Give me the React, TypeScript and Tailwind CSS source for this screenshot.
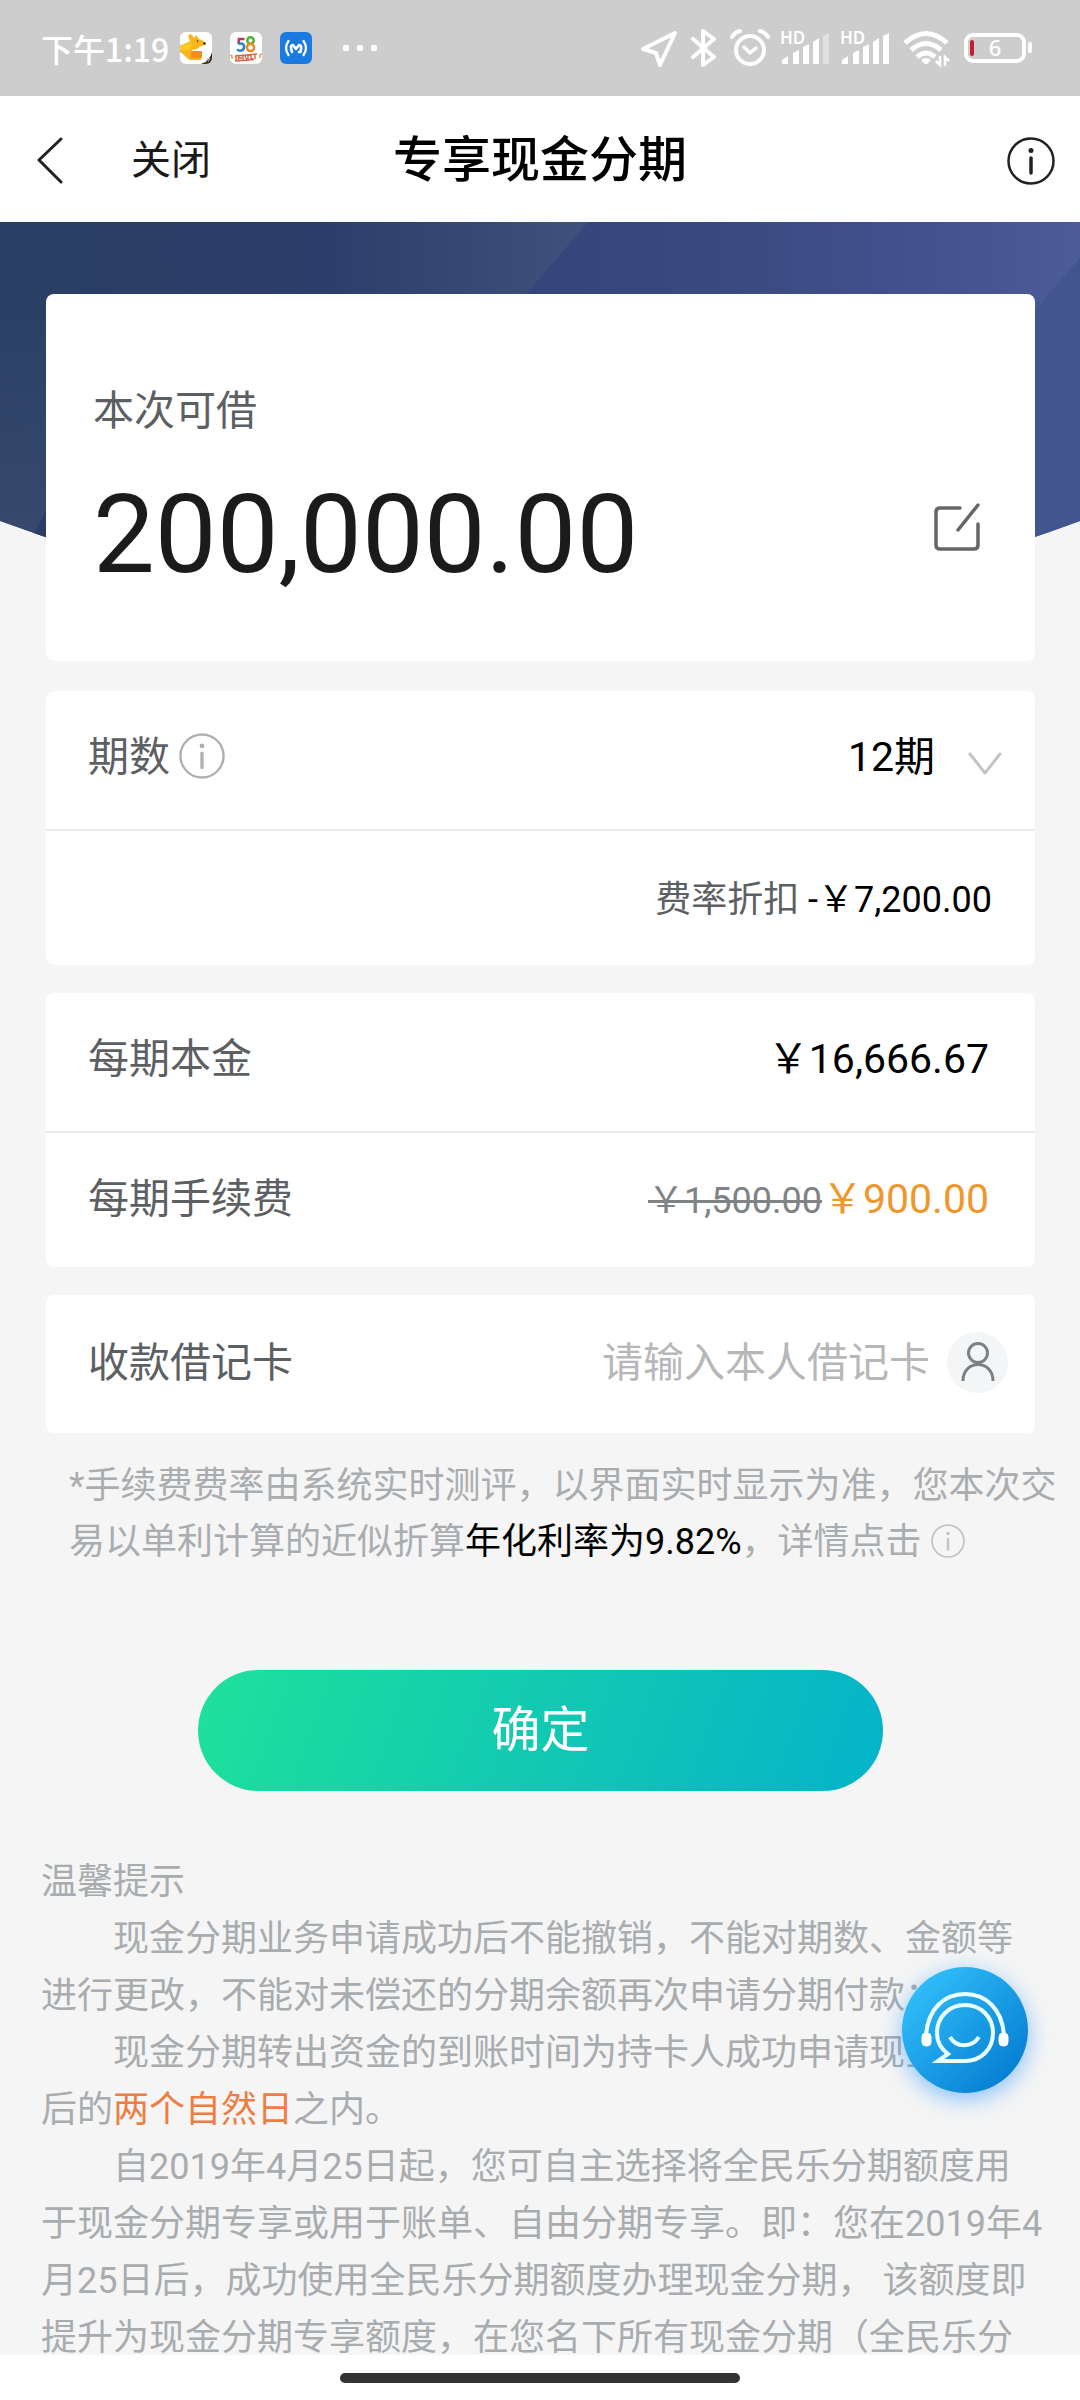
import { useState } from "react";
import type { ReactNode } from "react";

function KangarooIcon() {
  return (
    <svg viewBox="0 0 32 32" className="size-8" aria-hidden="true">
      <defs>
        <clipPath id="kangaroo-clip">
          <rect width="32" height="32" rx="6" />
        </clipPath>
      </defs>
      <g clipPath="url(#kangaroo-clip)">
        <rect width="32" height="32" fill="#fff" />
        <path d="M0 13 C3 13 6 11 10 9 L8 3 C10 1 13 3 14 6 L16 3 L19 7 C23 8 25 10 25 12 L23 14 C21 14 19 15 17 17 L12 18 L11 25 L21 26 L21 28 L10 28 C6 26 4 22 0 20 Z" fill="#f8b51c" />
        <path d="M0 13 C5 13 8 12 11 10 C14 15 8 20 0 18 Z" fill="#fcc925" />
        <rect x="11" y="19" width="11" height="7" rx="1" fill="#f58a1f" />
        <circle cx="24.500" cy="11.500" r="1.200" fill="#2b1c14" />
        <circle cx="17.500" cy="9" r="0.800" fill="#2b1c14" />
        <path d="M21 32 Q30 29 32 20 V32 Z" fill="#33241d" />
        <path d="M25 31 l3 -5 M28 30 l2 -4" stroke="#c9b8a8" strokeWidth="1" fill="none" />
      </g>
    </svg>
  );
}

function FiftyEightIcon() {
  return (
    <svg viewBox="0 0 32 32" className="size-8" aria-hidden="true">
      <rect width="32" height="32" rx="6" fill="#fff" />
      <path d="M14.500 7 H9 L8.500 12" fill="none" stroke="#c2335f" strokeWidth="2.600" />
      <path d="M8.500 12 C13 10.500 14.500 13 14 15.500 C13.500 19 9.500 19.500 7 17.500" fill="none" stroke="#2487c8" strokeWidth="2.600" />
      <circle cx="20.500" cy="8.500" r="3.200" fill="none" stroke="#4fb032" strokeWidth="2.500" />
      <circle cx="20.500" cy="15.500" r="3.600" fill="none" stroke="#ef8a23" strokeWidth="2.500" />
      <path d="M5 24 L27 22 M6 24 v5 M9 24 l-1 4 M9 26 h3 M13 23 v5 M15 24 l2 4 M18 23 v5 M21 23 v4 h2 M25 23 v4 M5 29 L24 27.500" fill="none" stroke="#dc5a35" strokeWidth="1.300" />
      <path d="M0 23 l2 1 v3 M32 22 l-2 1 v3" fill="none" stroke="#eda04e" strokeWidth="1.500" />
    </svg>
  );
}

function MSignalIcon() {
  return (
    <svg viewBox="0 0 32 32" className="size-8" aria-hidden="true" fill="none" stroke="#fff" strokeLinecap="round" strokeLinejoin="round">
      <rect width="32" height="32" rx="6" fill="#1b7ae0" stroke="none" />
      <path d="M8.500 9 Q3.500 16 8.500 23 M23.500 9 Q28.500 16 23.500 23" strokeWidth="2.200" />
      <path d="M12 20 Q9.500 13 13 13 L16 17 L19 13 Q22.500 13 20.500 20 H19" strokeWidth="2.600" />
    </svg>
  );
}

function SignalIcon({ weak = false }: { weak?: boolean }) {
  return (
    <svg viewBox="0 -10 50 56" className="h-14 w-[50px]" aria-hidden="true" fill="#fff">
      <text x="0" y="14" fontFamily="Noto Sans" fontWeight="600" fontSize="17">HD</text>
      <path d="M2 34 V30 L8 26 V34 Z" />
      <path d="M13 34 V23 L19 20 V34 Z" />
      <path d="M23 34 V17 L29 14 V34 Z" />
      <path d="M33 34 V12 L39 8 V34 Z" />
      <path d="M43 34 V6 L49 3 V34 Z" opacity={weak ? 0.4 : 1} />
    </svg>
  );
}

function StatusBar() {
  return (
    <div className="flex h-24 shrink-0 items-center bg-[#cdcdcd] pl-[41px] pr-[46px] text-white">
      <span className="w-[139px] whitespace-nowrap font-['Noto_Sans_CJK_SC',sans-serif] text-[32px] font-medium leading-none">下午1:19</span>
      <div className="flex items-center gap-[18px]">
        <KangarooIcon />
        <FiftyEightIcon />
        <MSignalIcon />
        <svg viewBox="0 0 48 32" className="ml-[6px] h-8 w-12" aria-hidden="true" fill="#fff">
          <circle cx="10" cy="16" r="3.200" />
          <circle cx="24" cy="16" r="3.200" />
          <circle cx="38" cy="16" r="3.200" />
        </svg>
      </div>
      <div className="ml-auto flex items-center gap-[10px]" aria-hidden="true">
        <svg viewBox="0 0 40 40" className="size-10" fill="none" stroke="#fff" strokeWidth="4" strokeLinejoin="round">
          <path d="M35 5 L3 21 L16 25 L20 37 Z" />
        </svg>
        <svg viewBox="0 0 30 40" className="h-10 w-[30px]" fill="none" stroke="#fff" strokeWidth="4" strokeLinejoin="round" strokeLinecap="round">
          <path d="M3 11 L24 29 L13 37 V3 L24 11 L3 29" />
        </svg>
        <svg viewBox="0 0 40 40" className="size-10" fill="none" stroke="#fff" strokeWidth="4" strokeLinecap="round" strokeLinejoin="round">
          <circle cx="20" cy="22" r="14" />
          <path d="M14 19 L20 25 L26 20" strokeWidth="3.500" />
          <path d="M2 9 Q5 4 10 3 M30 3 Q35 4 38 9" />
        </svg>
        <SignalIcon weak />
        <SignalIcon />
        <svg viewBox="0 0 52 40" className="h-10 w-[52px]" fill="none" stroke="#fff" strokeWidth="5">
          <path d="M5 15 Q26 -4 47 15" />
          <path d="M11 22 Q26 9 41 22" />
          <path d="M17 29 Q26 21 35 29" />
          <path d="M21 32 Q26 28 31 32 L27 36 H25 Z" fill="#fff" stroke="none" />
          <path d="M40 28 V37 L36 33 M45 38 V29 L49 33" strokeWidth="2.500" />
        </svg>
        <svg viewBox="0 0 72 40" className="h-10 w-[72px]" fill="none">
          <rect x="4" y="7" width="58" height="26" rx="7" stroke="#fff" strokeWidth="4" />
          <rect x="8" y="12" width="4" height="16" rx="2" fill="#c11f2e" />
          <rect x="66" y="14" width="4" height="11" rx="2" fill="#fff" />
          <text x="33" y="28" textAnchor="middle" fontFamily="Noto Sans" fontSize="22" fill="#fff" fontWeight="500">6</text>
        </svg>
      </div>
    </div>
  );
}

function InfoIcon({ className }: { className: string }) {
  return (
    <svg viewBox="0 0 48 48" className={className} fill="none" stroke="currentColor" aria-hidden="true">
      <circle cx="24" cy="24" r="22.500" strokeWidth="2.500" />
      <path d="M24 21 V36" strokeWidth="3.500" strokeLinecap="round" />
      <circle cx="24" cy="13.500" r="2.500" fill="currentColor" stroke="none" />
    </svg>
  );
}

function Header() {
  return (
    <header className="grid h-[126px] shrink-0 grid-cols-[1fr_auto_1fr] items-center bg-white px-[25px] pt-1">
      <div className="flex items-center pl-[11px]">
        <button type="button" aria-label="返回">
          <svg viewBox="0 0 28 48" className="h-12 w-7" fill="none" stroke="#222" strokeWidth="3" strokeLinecap="round" strokeLinejoin="round">
            <path d="M25 2 L3 23 L25 45" />
          </svg>
        </button>
        <button type="button" className="ml-[67px] text-[40px] text-[#1a1a1a]">关闭</button>
      </div>
      <h1 className="text-[49px] font-medium text-black">专享现金分期</h1>
      <button type="button" aria-label="说明" className="justify-self-end text-[#222]">
        <InfoIcon className="size-12" />
      </button>
    </header>
  );
}

function Banner() {
  return (
    <svg viewBox="0 0 1080 360" preserveAspectRatio="none" className="absolute inset-x-0 top-0 h-[360px] w-full" aria-hidden="true">
      <defs>
        <clipPath id="banner-clip">
          <path d="M0 0 H1080 V299 Q540 499 0 299 Z" />
        </clipPath>
        <linearGradient id="banner-left" x1="0" y1="0" x2="1" y2="0">
          <stop offset="0" stopColor="#2a3f63" />
          <stop offset="0.550" stopColor="#2c3e6b" />
          <stop offset="1" stopColor="#3f537c" />
        </linearGradient>
        <linearGradient id="banner-right" gradientUnits="userSpaceOnUse" x1="530" y1="0" x2="1080" y2="0">
          <stop offset="0" stopColor="#33457b" />
          <stop offset="0.400" stopColor="#3a4b81" />
          <stop offset="0.700" stopColor="#43518f" />
          <stop offset="1" stopColor="#4c5c98" />
        </linearGradient>
        <linearGradient id="banner-fade" x1="0" y1="0" x2="0" y2="1">
          <stop offset="0.200" stopColor="#3f537c" stopOpacity="0" />
          <stop offset="1" stopColor="#3f5070" stopOpacity="0.700" />
        </linearGradient>
      </defs>
      <g clipPath="url(#banner-clip)">
        <rect width="600" height="360" fill="url(#banner-left)" />
        <rect width="60" height="360" fill="url(#banner-fade)" />
        <path d="M60 260 L30 320 H80 Z" fill="#2c3c69" />
        <path d="M588 0 H1080 V360 H280 Z" fill="url(#banner-right)" />
        <path d="M1080 36 L1035 88 V360 H1080 Z" fill="#42558f" />
      </g>
    </svg>
  );
}

function Row({ children, divider = false }: { children: ReactNode; divider?: boolean }) {
  return (
    <div className={divider ? "flex h-[136px] items-center border-t-2 border-[#ebebeb] pl-[42px]" : "flex h-[138px] items-center pb-1 pl-[42px]"}>
      {children}
    </div>
  );
}

function Card({ children }: { children: ReactNode }) {
  return <section className="rounded-lg bg-white text-[41px] text-[#5d6063]">{children}</section>;
}

function SupportButton() {
  return (
    <button
      type="button"
      aria-label="在线客服"
      className="absolute bottom-[262px] right-[52px] size-[126px] rounded-full bg-linear-to-br from-[#36c8ff] to-[#0074cc] shadow-[0_6px_22px_rgba(40,150,255,0.550)]"
    >
      <svg viewBox="0 0 126 126" className="size-full" fill="none" stroke="#eaffff" strokeWidth="4">
        <path d="M24 68 C26 42 42 27 63 27 C84 27 100 42 102 68" />
        <path d="M36 94 L46 87 C38 81 35 74 35 66 C35 50 47 38 63 38 C79 38 91 50 91 66 C91 82 79 94 63 94 Z" strokeLinejoin="miter" />
        <path d="M48 70 C54 81 70 81 77 70" />
        <rect x="20" y="66" width="9" height="13" rx="4" fill="#fff" stroke="#fff" strokeWidth="1" />
        <rect x="97" y="66" width="9" height="13" rx="4" fill="#fff" stroke="#fff" strokeWidth="1" />
      </svg>
    </button>
  );
}

export default function App() {
  const [periods, setPeriods] = useState("12");
  const [card, setCard] = useState("");

  return (
    <div className="flex h-screen flex-col bg-[#f5f5f5] font-['Roboto','Noto_Sans_CJK_SC',sans-serif]" lang="zh-CN">
      <StatusBar />
      <Header />
      <div className="relative flex min-h-0 flex-1 flex-col">
        <main className="relative min-h-0 flex-1 overflow-y-auto [scrollbar-width:none]">
          <Banner />
          <div className="relative flex flex-col gap-7 pl-[46px] pr-[45px] pt-[72px]">
            <section className="mb-[2px] rounded-lg bg-white px-[47px] pb-[64px] pt-[87px]">
              <h2 className="text-[41px] leading-[60px] text-[#5d6063]">本次可借</h2>
              <div className="mt-8 flex items-center justify-between">
                <strong className="text-[110px] font-normal leading-[124px] text-[#1b1b1b]">200,000.00</strong>
                <button type="button" aria-label="修改金额" className="mb-4 mr-[7px]">
                  <svg viewBox="0 0 48 48" className="size-12" fill="none" stroke="#666" strokeWidth="3.500" strokeLinecap="round">
                    <path d="M27 5 H7 Q3 5 3 9 V42 Q3 46 7 46 H41 Q45 46 45 42 V21" />
                    <path d="M45 2 L25 27" />
                  </svg>
                </button>
              </div>
            </section>

            <Card>
              <Row>
                <label htmlFor="periods">期数</label>
                <button type="button" aria-label="期数说明" className="mb-1 ml-[9px] text-[#b0b0b0]">
                  <InfoIcon className="size-[46px]" />
                </button>
                <div className="relative ml-auto">
                  <select
                    id="periods"
                    value={periods}
                    onChange={(e) => setPeriods(e.target.value)}
                    className="appearance-none bg-transparent pr-[100px] text-right text-black"
                  >
                    <option value="12">12期</option>
                  </select>
                  <svg viewBox="0 0 34 24" className="pointer-events-none absolute right-[33px] top-1/2 h-6 w-[34px] -translate-y-1/4" fill="none" stroke="#c4c4c4" strokeWidth="3" strokeLinecap="round" strokeLinejoin="round" aria-hidden="true">
                    <path d="M2 2 L17 21 L32 2" />
                  </svg>
                </div>
              </Row>
              <Row divider>
                <p className="ml-auto pr-[43px] pt-1 text-[36px]">
                  费率折扣 <span className="text-black">-￥7,200.00</span>
                </p>
              </Row>
            </Card>

            <Card>
              <Row>
                <span>每期本金</span>
                <span className="ml-auto pr-[46px] text-black">￥16,666.67</span>
              </Row>
              <Row divider>
                <span>每期手续费</span>
                <p className="ml-auto pr-[46px] text-[#f0972b]">
                  <s className="text-[36px] text-[#808386]">￥1,500.00</s>￥900.00
                </p>
              </Row>
            </Card>

            <Card>
              <Row>
                <label htmlFor="debit-card" className="shrink-0 pt-1">收款借记卡</label>
                <input
                  id="debit-card"
                  value={card}
                  onChange={(e) => setCard(e.target.value)}
                  placeholder="请输入本人借记卡"
                  className="min-w-0 flex-1 bg-transparent pt-1 text-right text-black placeholder:text-[#b6b7b8] focus:outline-none"
                />
                <button type="button" aria-label="选择收款人" className="ml-[17px] mr-[27px] size-[61px] shrink-0 rounded-full bg-[#f4f5f6]">
                  <svg viewBox="0 0 61 61" className="size-full" fill="none" stroke="#7d7f81" strokeWidth="3">
                    <circle cx="31" cy="21" r="9.500" />
                    <path d="M16 49 C16 27 46 27 46 49" />
                  </svg>
                </button>
              </Row>
            </Card>
          </div>

          <p className="pl-[69px] pr-[16px] pt-[25px] text-[36px] leading-[56px] text-[#aaadb0]">
            *手续费费率由系统实时测评，以界面实时显示为准，您本次交易以单利计算的近似折算<span className="text-black">年化利率为9.82%</span>，详情点击
            <button type="button" aria-label="费率详情" className="ml-[9px] align-[-4px] text-[#c2c4c6]">
              <InfoIcon className="size-[34px]" />
            </button>
          </p>

          <div className="mt-[100px] pl-[198px] pr-[197px]">
            <button
              type="button"
              className="h-[121px] w-full rounded-full bg-[linear-gradient(110deg,#1fe19b_0%,#12c9b2_50%,#04b3ca_100%)] text-[49px] text-white"
            >
              确定
            </button>
          </div>

          <section className="mt-[63px] pl-[41px] text-[36px] leading-[57px] text-[#a9acaf]">
            <h2>温馨提示</h2>
            <p className="indent-[2em]">
              现金分期业务申请成功后不能撤销，不能对期数、金额等
              <br />
              进行更改，不能对未偿还的分期余额再次申请分期付款；
            </p>
            <p className="indent-[2em]">
              现金分期转出资金的到账时间为持卡人成功申请现金分期
              <br />
              后的<em className="not-italic text-[#ee7d43]">两个自然日</em>之内。
            </p>
            <p className="indent-[2em]">
              自2019年4月25日起，您可自主选择将全民乐分期额度用
              <br />
              于现金分期专享或用于账单、自由分期专享。即：您在2019年4
              <br />
              月25日后，成功使用全民乐分期额度办理现金分期， 该额度即
              <br />
              提升为现金分期专享额度，在您名下所有现金分期（全民乐分
            </p>
          </section>
        </main>
        <SupportButton />
      </div>
      <div className="flex h-[45px] shrink-0 items-center justify-center bg-white">
        <div className="h-[10px] w-[400px] rounded-full bg-[#333]" />
      </div>
    </div>
  );
}
